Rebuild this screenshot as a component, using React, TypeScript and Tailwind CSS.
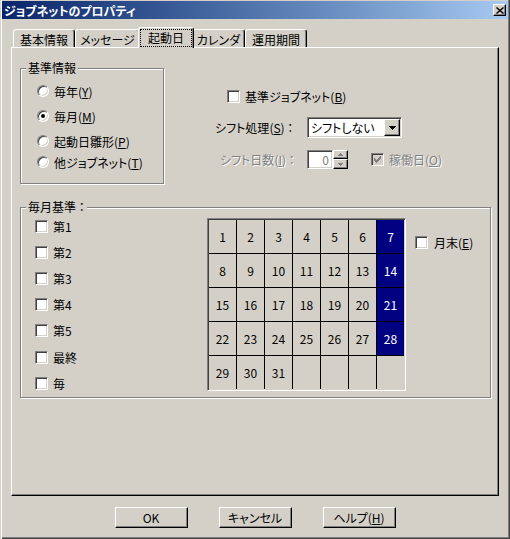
import React from "react"

const sunken =
  "border border-t-[#808080] border-l-[#808080] border-b-white border-r-white shadow-[inset_1px_1px_0_#404040,inset_-1px_-1px_0_#d4d0c8]"
const raised =
  "border border-t-white border-l-white border-b-black border-r-black shadow-[inset_-1px_-1px_0_#808080]"
const etched =
  "border border-[#808080] shadow-[inset_1px_1px_0_#fff,1px_1px_0_#fff]"
const dim = "text-[#808080] [text-shadow:1px_1px_0_#fff]"

function Key({ c }: { c: string }) {
  return (
    <>
      (<span className="underline">{c}</span>)
    </>
  )
}

function CheckBox({ checked, disabled }: { checked?: boolean; disabled?: boolean }) {
  return (
    <span
      className={`flex h-[13px] w-[13px] shrink-0 items-center justify-center ${sunken} ${
        disabled ? "bg-[#d4d0c8]" : "bg-white"
      }`}
    >
      {checked && (
        <svg width="7" height="7" viewBox="0 0 7 7" shapeRendering="crispEdges">
          <path d="M0 2h1v1h1v1h1V3h1V2h1V1h1V0h1v3H6v1H5v1H4v1H3v1H2V6H1V5H0z" fill={disabled ? "#808080" : "#000"} />
        </svg>
      )}
    </span>
  )
}

function Radio({ checked }: { checked?: boolean }) {
  return (
    <span className="flex h-[12px] w-[12px] shrink-0 items-center justify-center rounded-full border border-t-[#808080] border-l-[#808080] border-b-white border-r-white bg-white shadow-[inset_1px_1px_0_#404040,inset_-1px_-1px_0_#d4d0c8]">
      {checked && <span className="h-[4px] w-[4px] rounded-full bg-black" />}
    </span>
  )
}

function Arrow({ up, color = "#000", w = 7 }: { up?: boolean; color?: string; w?: number }) {
  const h = Math.ceil(w / 2)
  return (
    <svg width={w} height={h} viewBox={`0 0 ${w} ${h}`} shapeRendering="crispEdges">
      <path d={up ? `M0 ${h}L${w / 2} 0L${w} ${h}z` : `M0 0h${w}L${w / 2} ${h}z`} fill={color} />
    </svg>
  )
}

const tabs = [
  { label: "基本情報", w: "w-[62px]" },
  { label: "メッセージ", w: "w-[65px]" },
  { label: "起動日", w: "w-[56px]", active: true },
  { label: "カレンダ", w: "w-[53px]" },
  { label: "運用期間", w: "w-[62px]" },
]

const radios = [
  { label: "毎年", k: "Y", cls: "mt-[9px]" },
  { label: "毎月", k: "M", cls: "mt-[9px]", checked: true },
  { label: "起動日雛形", k: "P", cls: "mt-[9px]" },
  { label: "他ジョブネット", k: "T", cls: "mt-[5px]" },
]

const weeks = ["第1", "第2", "第3", "第4", "第5", "最終", "毎"]

const days = Array.from({ length: 35 }, (_, i) => (i < 31 ? i + 1 : null))

export default function App() {
  return (
    <div className="h-[539px] w-[510px] overflow-hidden bg-[#d4d0c8] font-['Noto_Sans_CJK_JP','Noto_Sans',sans-serif] text-[12px] leading-[13px] text-black [font-feature-settings:'palt'] shadow-[inset_1px_0_0_#d4d0c8,inset_2px_0_0_#fff,inset_-1px_-1px_0_#404040,inset_-2px_-2px_0_#808080]">
      {/* title bar */}
      <div className="mx-[2px] mt-px flex h-[18px] items-center justify-between bg-linear-to-r from-[#0a246a] to-[#a6caf0] pl-[2px] pr-[2px]">
        <span className="text-[12px] font-bold text-white">ジョブネットのプロパティ</span>
        <button className={`flex h-[12px] w-[13px] items-center justify-center bg-[#d4d0c8] ${raised}`}>
          <svg width="8" height="7" viewBox="0 0 8 7">
            <path d="M0.5 0.5L7.5 6.5M7.5 0.5L0.5 6.5" stroke="#000" strokeWidth="1.4" />
          </svg>
        </button>
      </div>

      {/* tabs */}
      <div className="ml-[13px] mt-[8px] flex h-[20px] items-end">
        {tabs.map((t) =>
          t.active ? (
            <div
              key={t.label}
              className={`relative z-10 -mx-[2px] -mb-px flex h-[21px] ${t.w} rounded-t-[3px] border-l border-t border-r border-white border-r-black bg-[#d4d0c8] p-px shadow-[inset_-1px_0_0_#808080]`}
            >
              <span className="flex flex-1 items-center justify-center border border-dotted border-black pb-px">
                {t.label}
              </span>
            </div>
          ) : (
            <div
              key={t.label}
              className={`flex h-[18px] ${t.w} items-center justify-center rounded-t-[3px] border-l border-t border-r border-white border-r-black pt-px shadow-[inset_-1px_0_0_#808080]`}
            >
              {t.label}
            </div>
          )
        )}
      </div>

      {/* panel */}
      <div className="ml-[11px] flex h-[449px] w-[488px] flex-col border border-t-white border-l-white border-b-black border-r-black pl-[8px] pt-[14px] shadow-[inset_-1px_-1px_0_#808080]">
        <div className="flex">
          <fieldset className={`h-[122px] w-[144px] ${etched}`}>
            <legend className="ml-[5px] bg-[#d4d0c8] px-[2px] leading-[12px]">基準情報</legend>
            <div className="flex flex-col pl-[16px]">
              {radios.map((r) => (
                <label key={r.label} className={`flex h-[16px] items-center gap-[5px] ${r.cls}`}>
                  <Radio checked={r.checked} />
                  <span>
                    {r.label}
                    <Key c={r.k} />
                  </span>
                </label>
              ))}
            </div>
          </fieldset>

          <div className="ml-[51px] flex flex-col">
            <label className="ml-[12px] mt-[28px] flex h-[13px] items-center gap-[5px]">
              <CheckBox />
              <span>
                基準ジョブネット
                <Key c="B" />
              </span>
            </label>

            <div className="mt-[14px] flex items-center">
              <span className="w-[92px]">
                シフト処理
                <Key c="S" /> ：
              </span>
              <div className={`flex h-[21px] w-[95px] items-center bg-white p-px ${sunken}`}>
                <span className="flex-1 pl-[2px]">シフトしない</span>
                <span className={`flex h-[17px] w-[16px] items-center justify-center bg-[#d4d0c8] ${raised}`}>
                  <Arrow />
                </span>
              </div>
            </div>

            <div className="mt-[12px] flex items-center">
              <span className={`ml-[5px] w-[87px] ${dim}`}>
                シフト日数
                <Key c="I" /> ：
              </span>
              <div className="flex">
                <span className={`flex h-[19px] w-[26px] items-center justify-end bg-white pr-[3px] ${sunken} text-[#808080]`}>
                  0
                </span>
                <span className="flex h-[19px] w-[15px] flex-col">
                  <span className={`flex h-[9px] items-center justify-center bg-[#d4d0c8] ${raised}`}>
                    <Arrow up w={5} color="#808080" />
                  </span>
                  <span className={`flex h-[10px] items-center justify-center bg-[#d4d0c8] ${raised}`}>
                    <Arrow w={5} color="#808080" />
                  </span>
                </span>
              </div>
              <label className="ml-[23px] flex items-center gap-[5px]">
                <CheckBox checked disabled />
                <span className={dim}>
                  稼働日
                  <Key c="O" />
                </span>
              </label>
            </div>
          </div>
        </div>

        <fieldset className={`mt-[17px] h-[197px] w-[471px] ${etched}`}>
          <legend className="ml-[5px] bg-[#d4d0c8] px-[2px] leading-[12px]">毎月基準 ：</legend>
          <div className="flex">
            <div className="flex w-[186px] flex-col pl-[14px]">
              {weeks.map((w) => (
                <label key={w} className="flex h-[26.2px] items-center gap-[5px]">
                  <CheckBox />
                  <span>{w}</span>
                </label>
              ))}
            </div>

            <div className={`mt-[5px] self-start bg-black p-px ${sunken}`}>
              <div className="grid grid-cols-[repeat(7,27px)] grid-rows-[repeat(5,33px)] gap-px bg-black">
                {days.map((d, i) => {
                  const hot = d !== null && d % 7 === 0
                  return (
                    <div
                      key={i}
                      className={`flex items-center justify-center ${
                        hot ? "bg-[#000080] text-white" : "bg-[#d4d0c8]"
                      }`}
                    >
                      {d}
                    </div>
                  )
                })}
              </div>
            </div>

            <label className="ml-[9px] mt-[23px] flex h-[13px] items-center gap-[6px] self-start">
              <CheckBox />
              <span>
                月末
                <Key c="E" />
              </span>
            </label>
          </div>
        </fieldset>
      </div>

      {/* buttons */}
      <div className="mt-[11px] flex justify-center gap-[31px]">
        <button className={`h-[21px] w-[73px] bg-[#d4d0c8] ${raised}`}>OK</button>
        <button className={`h-[21px] w-[73px] bg-[#d4d0c8] ${raised}`}>キャンセル</button>
        <button className={`h-[21px] w-[73px] bg-[#d4d0c8] ${raised}`}>
          ヘルプ
          <Key c="H" />
        </button>
      </div>
    </div>
  )
}
